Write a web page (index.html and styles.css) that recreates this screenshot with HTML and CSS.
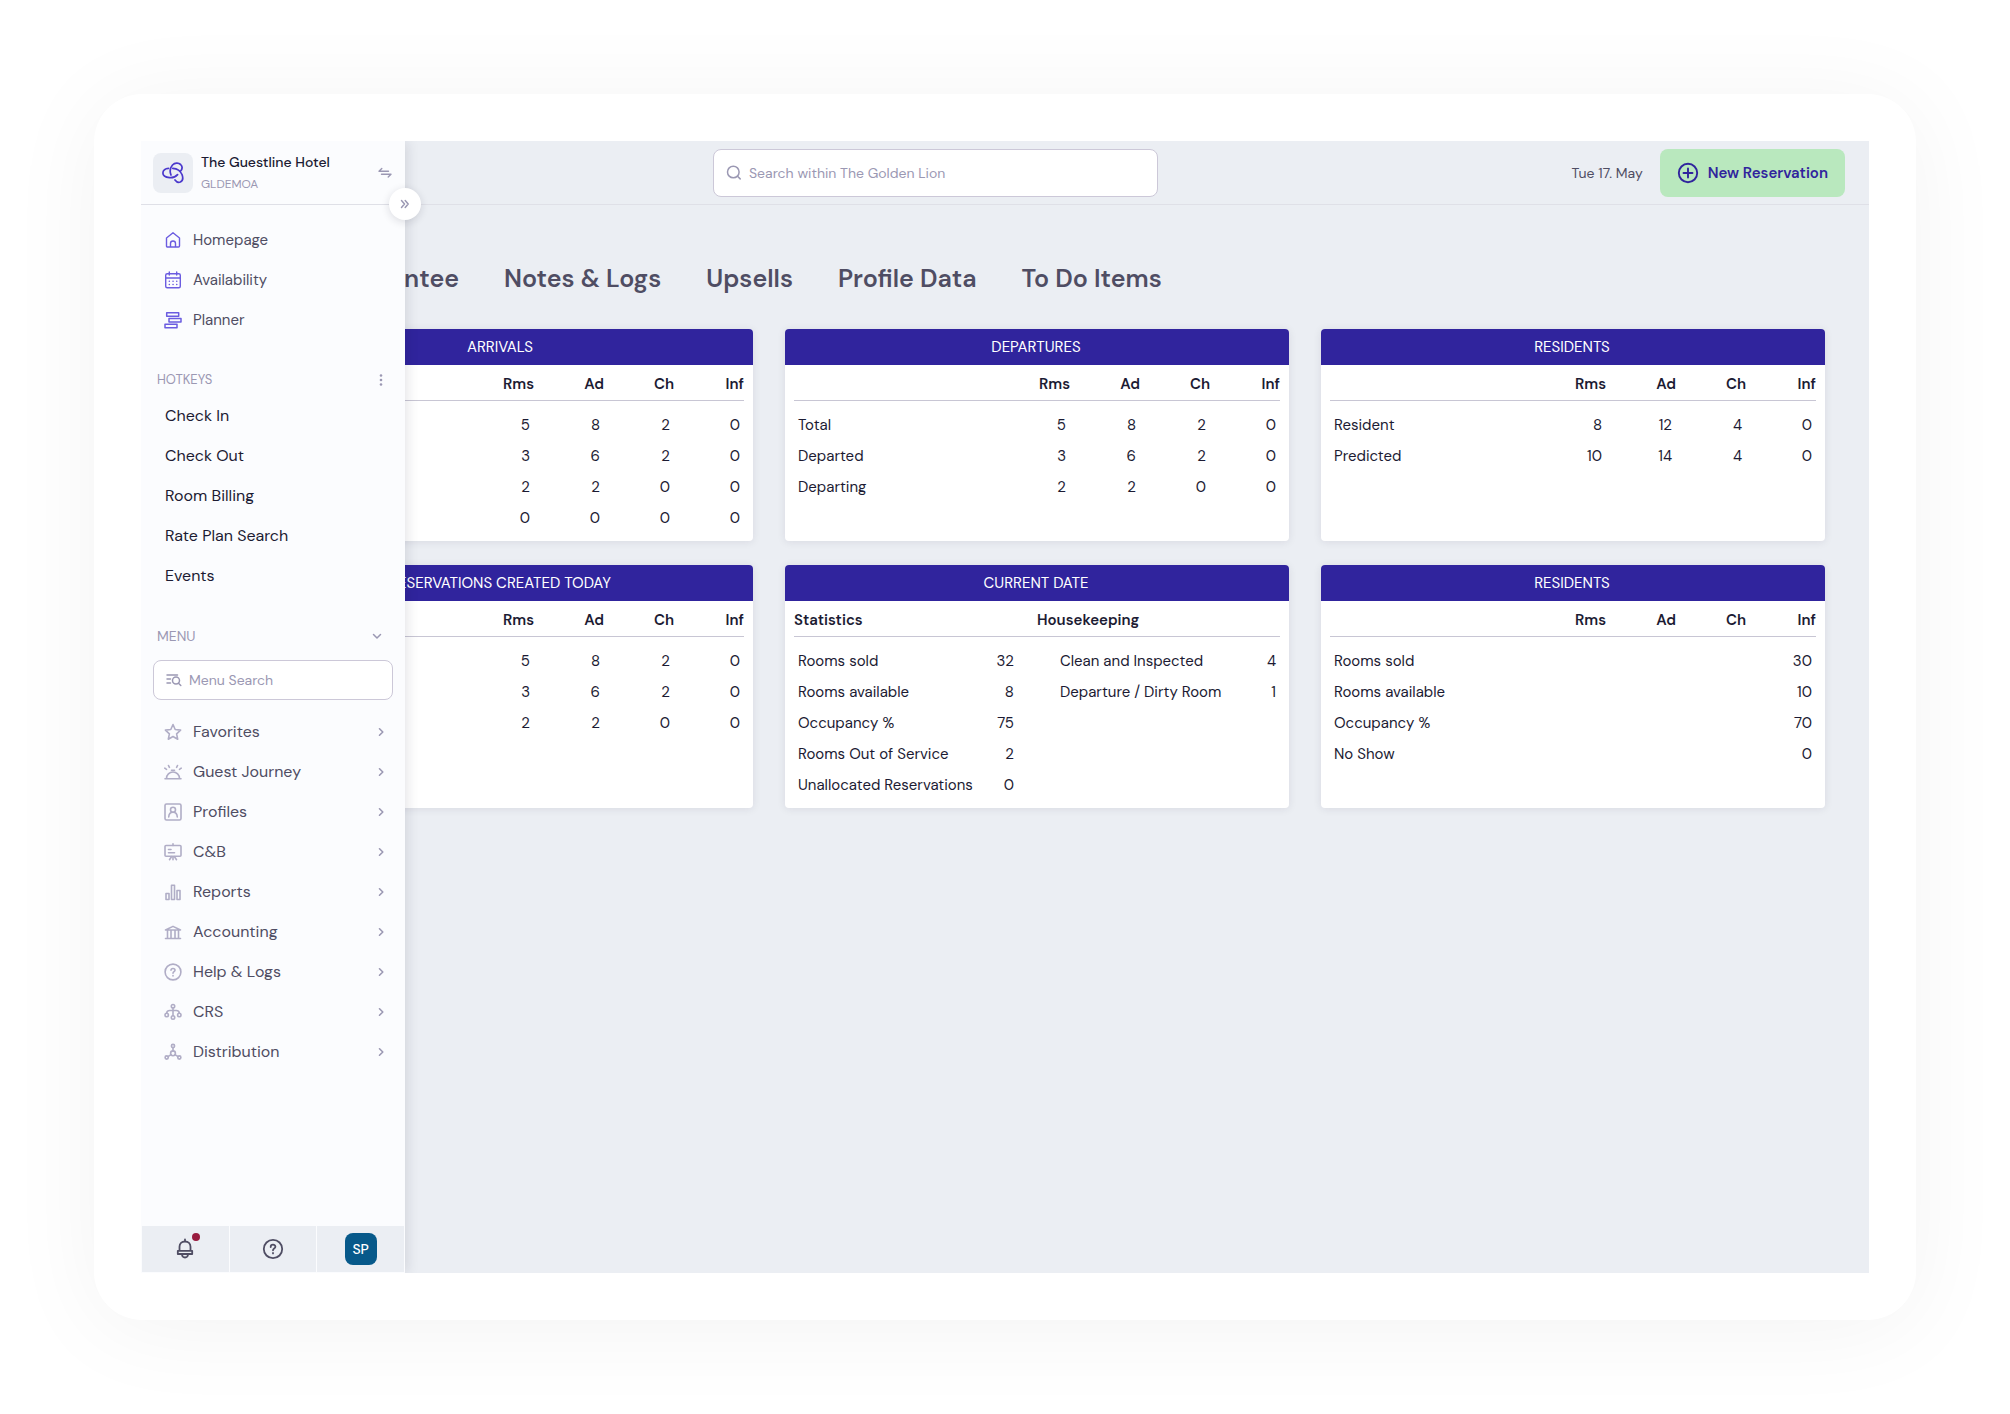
FILE: index.html
```html
<!DOCTYPE html>
<html lang="en">
<head>
<meta charset="utf-8">
<meta name="viewport" content="width=device-width, initial-scale=1">
<title>The Guestline Hotel</title>
<link rel="stylesheet" href="styles.css">
</head>
<body>
<svg class="sprite" aria-hidden="true">
  <symbol id="chevron" viewBox="0 0 10 10"><path d="M3.500 1.800L6.800 5 3.500 8.200"/></symbol>
</svg>
<div class="frame">
  <div class="app">
    <aside class="sidebar">
      <div class="property">
        <span class="logo">
          <svg width="22" height="22" viewBox="0 0 22 22" stroke-width="1.7">
            <path d="M15.600 12.600C13.500 14.900 10.500 15.900 7.500 15.600C3.500 15.300 .9 13.500 .9 11C.9 8.300 3.500 6.500 6.400 6.300"/>
            <path d="M9 13C7.600 9.500 8.300 5.500 10.500 3C12.800 .8 16.500 .6 18.600 2.500C20.600 4.500 20.200 7.300 18.400 9.300"/>
            <path d="M10.800 6.400C15 6.700 18.500 9 20 12.500C21.300 16 20.500 19 18.300 20C16.300 20.800 14.300 19.800 13 18"/>
          </svg>
        </span>
        <div class="property-text">
          <strong class="property-name">The Guestline Hotel</strong>
          <span class="property-code">GLDEMOA</span>
        </div>
        <button class="icon-button" type="button" aria-label="Switch property">
          <svg width="14" height="12" viewBox="0 0 14 12" stroke-width="1.4"><path d="M10.500 4.200H1L3.800 1.400M3.500 7.200H13L10.200 10"/></svg>
        </button>
        <button class="expand" type="button" aria-label="Expand menu">
          <svg width="10" height="10" viewBox="0 0 10 10" stroke-width="1.5"><path d="M1.500 1.500l3 3.500-3 3.500M5.200 1.500l3 3.500-3 3.500"/></svg>
        </button>
      </div>

      <nav class="nav nav-main" aria-label="Main">
        <a class="nav-item" href="#"><svg width="18" height="18" viewBox="0 0 18 18" stroke-width="1.400"><path d="M2.500 7L9 1.800 15.500 7V15a1 1 0 0 1-1 1h-11a1 1 0 0 1-1-1zM6.500 16v-3.500a2.500 2.500 0 0 1 5 0V16"/></svg>Homepage</a>
        <a class="nav-item" href="#"><svg width="18" height="18" viewBox="0 0 18 18" stroke-width="1.400"><rect x="1.700" y="2.700" width="14.600" height="14" rx="1.500"/><path d="M1.700 7h14.600M5.300 1v3M12.700 1v3"/><path d="M5.300 10.300h8M5.300 13.500h8" stroke-width="1.500" stroke-dasharray="0.100 3.600"/></svg>Availability</a>
        <a class="nav-item" href="#"><svg width="18" height="18" viewBox="0 0 18 18" stroke-width="1.500"><path d="M2.700 1.700h12v3.500h-12zM5 7.400h12v3.500H5zM1 13.200h12v3.500H1z"/></svg>Planner</a>
      </nav>

      <section class="hotkeys">
        <div class="section-head">
          <h2 class="section-title">HOTKEYS</h2>
          <button class="icon-button" type="button" aria-label="Hotkey options">
            <svg class="dots" width="8" height="12" viewBox="0 0 8 12"><circle cx="4" cy="1.500" r="1.300"/><circle cx="4" cy="6" r="1.300"/><circle cx="4" cy="10.500" r="1.300"/></svg>
          </button>
        </div>
        <nav class="nav nav-hot" aria-label="Hotkeys">
          <a class="nav-item" href="#">Check In</a>
          <a class="nav-item" href="#">Check Out</a>
          <a class="nav-item" href="#">Room Billing</a>
          <a class="nav-item" href="#">Rate Plan Search</a>
          <a class="nav-item" href="#">Events</a>
        </nav>
      </section>

      <section class="menu">
        <div class="section-head menu-head">
          <h2 class="section-title">MENU</h2>
          <button class="icon-button" type="button" aria-label="Collapse menu">
            <svg width="10" height="10" viewBox="0 0 10 10" stroke-width="1.500"><path d="M1.500 3.500L5 7l3.500-3.500"/></svg>
          </button>
        </div>
        <label class="field menu-search">
          <svg width="16" height="14" viewBox="0 0 16 14" stroke-width="1.500"><path d="M1 2h10.500M1 6h3.500M1 10h3.500M12.500 10.300l2.300 2.200"/><circle cx="10" cy="7.500" r="3.500"/></svg>
          <input type="text" placeholder="Menu Search" aria-label="Menu Search">
        </label>
        <nav class="nav nav-menu" aria-label="Menu">
          <a class="nav-item" href="#"><svg width="18" height="18" viewBox="0 0 18 18"><path d="M9 1.500l2.200 5 5.400.6-4 3.700 1.100 5.400L9 13.500l-4.700 2.700 1.100-5.400-4-3.700 5.400-.6z"/></svg>Favorites<svg class="chevron" width="10" height="10"><use href="#chevron"/></svg></a>
          <a class="nav-item" href="#"><svg width="18" height="18" viewBox="0 0 18 18"><path d="M1 15.700h16M2.500 15.500a6.500 6.500 0 0 1 13 0M7.500 7.200h3M4.500 2.500l.9 1.900M13.500 2.500l-.9 1.900M.8 5.200l1.700 1.200M17.200 5.200l-1.700 1.200"/></svg>Guest Journey<svg class="chevron" width="10" height="10"><use href="#chevron"/></svg></a>
          <a class="nav-item" href="#"><svg width="18" height="18" viewBox="0 0 18 18"><rect x="1" y="1" width="16" height="16" rx="1.500"/><circle cx="9" cy="6.800" r="2.500"/><path d="M4.700 14c.2-3 1.600-4.700 4.300-4.700s4.100 1.700 4.300 4.700"/></svg>Profiles<svg class="chevron" width="10" height="10"><use href="#chevron"/></svg></a>
          <a class="nav-item" href="#"><svg width="18" height="18" viewBox="0 0 18 18"><rect x="1" y="2.500" width="16" height="10.800" rx="1"/><path d="M9 .8v1.700M4.500 6.500h2.500M4.500 9.700h6M7.500 13.700l-2 3M10.500 13.700l2 3M9 13.700v3"/></svg>C&amp;B<svg class="chevron" width="10" height="10"><use href="#chevron"/></svg></a>
          <a class="nav-item" href="#"><svg width="18" height="18" viewBox="0 0 18 18"><path d="M2 10.500h3v6H2zM7.500 2.300h3v14.200h-3zM13 7.500h3v9h-3z"/></svg>Reports<svg class="chevron" width="10" height="10"><use href="#chevron"/></svg></a>
          <a class="nav-item" href="#"><svg width="18" height="18" viewBox="0 0 18 18"><path d="M1.500 7L9 3.400 16.500 7zM1.500 15.500h15M3.500 7v8.500M7 7v8.500M11 7v8.500M14.500 7v8.500"/></svg>Accounting<svg class="chevron" width="10" height="10"><use href="#chevron"/></svg></a>
          <a class="nav-item" href="#"><svg width="18" height="18" viewBox="0 0 18 18"><circle cx="9" cy="9" r="7.900"/><path d="M7 7.300C7 5 11 5 11 7.200c0 1.500-2 1.400-2 3M9 12.600v.3"/></svg>Help &amp; Logs<svg class="chevron" width="10" height="10"><use href="#chevron"/></svg></a>
          <a class="nav-item" href="#"><svg width="18" height="18" viewBox="0 0 18 18"><circle cx="9" cy="3.200" r="1.700"/><circle cx="2.700" cy="12" r="1.700"/><circle cx="9" cy="14.500" r="1.700"/><circle cx="15.300" cy="12" r="1.700"/><path d="M9 5.200v7.400M2.700 10.200c0-2 1.300-2.700 3-2.700h6.600c1.700 0 3 .7 3 2.700"/></svg>CRS<svg class="chevron" width="10" height="10"><use href="#chevron"/></svg></a>
          <a class="nav-item" href="#"><svg width="18" height="18" viewBox="0 0 18 18"><circle cx="9" cy="3" r="1.600"/><circle cx="9" cy="10.300" r="2.400"/><circle cx="2.700" cy="14.500" r="1.600"/><circle cx="15.300" cy="14.500" r="1.600"/><path d="M9 5v3M7 11.700l-3 2M11 11.700l3 2"/></svg>Distribution<svg class="chevron" width="10" height="10"><use href="#chevron"/></svg></a>
        </nav>
      </section>

      <footer class="sidebar-footer">
        <button class="footer-button" type="button" aria-label="Notifications">
          <span class="bell">
            <svg width="22" height="22" viewBox="0 0 22 22" stroke-width="1.800"><path d="M5.500 12.500V8.700c0-3.200 2.300-5.200 5.500-5.200s5.500 2 5.500 5.200v3.800M11 3.500V1.500M3.800 12.800h14.400v3.200H3.800zM8 16.500c.3 4 5.700 4 6 0"/></svg>
            <span class="badge"></span>
          </span>
        </button>
        <button class="footer-button" type="button" aria-label="Help">
          <svg width="22" height="22" viewBox="0 0 22 22" stroke-width="1.800"><circle cx="11" cy="11" r="9.200"/><path d="M8.700 9C8.700 6 13.400 6 13.400 8.800c0 1.900-2.400 1.700-2.400 3.500M11 15v.4"/></svg>
        </button>
        <button class="footer-button" type="button" aria-label="Account"><span class="avatar">SP</span></button>
      </footer>
    </aside>

    <div class="main">
      <header class="topbar">
        <label class="field search">
          <svg width="16" height="16" viewBox="0 0 16 16" stroke-width="1.500"><circle cx="7.300" cy="7" r="5.800"/><path d="M11.500 11.200l2.700 2.700"/></svg>
          <input type="text" placeholder="Search within The Golden Lion" aria-label="Search within The Golden Lion">
        </label>
        <div class="actions">
          <time class="date" datetime="2022-05-17">Tue 17. May</time>
          <button class="primary" type="button">
            <svg width="22" height="22" viewBox="0 0 22 22" stroke-width="1.900"><circle cx="11" cy="11" r="9.200"/><path d="M11 6.500v9M6.500 11h9"/></svg>New Reservation
          </button>
        </div>
      </header>
      <main class="content">
        <nav class="tabs" aria-label="Sections">
          <a class="tab tab-first" href="#">Guarantee</a>
          <a class="tab" href="#">Notes &amp; Logs</a>
          <a class="tab" href="#">Upsells</a>
          <a class="tab" href="#">Profile Data</a>
          <a class="tab" href="#">To Do Items</a>
        </nav>
        <div class="cards">
          <section class="card">
            <h2 class="card-title">ARRIVALS</h2>
            <table class="data">
              <thead><tr><th class="label"></th><th>Rms</th><th>Ad</th><th>Ch</th><th>Inf</th></tr></thead>
              <tbody>
                <tr><td>Total</td><td>5</td><td>8</td><td>2</td><td>0</td></tr>
                <tr><td>Arrived</td><td>3</td><td>6</td><td>2</td><td>0</td></tr>
                <tr><td>Arriving</td><td>2</td><td>2</td><td>0</td><td>0</td></tr>
                <tr><td>No Show</td><td>0</td><td>0</td><td>0</td><td>0</td></tr>
              </tbody>
            </table>
          </section>
          <section class="card">
            <h2 class="card-title">DEPARTURES</h2>
            <table class="data">
              <thead><tr><th class="label"></th><th>Rms</th><th>Ad</th><th>Ch</th><th>Inf</th></tr></thead>
              <tbody>
                <tr><td>Total</td><td>5</td><td>8</td><td>2</td><td>0</td></tr>
                <tr><td>Departed</td><td>3</td><td>6</td><td>2</td><td>0</td></tr>
                <tr><td>Departing</td><td>2</td><td>2</td><td>0</td><td>0</td></tr>
              </tbody>
            </table>
          </section>
          <section class="card">
            <h2 class="card-title">RESIDENTS</h2>
            <table class="data">
              <thead><tr><th class="label"></th><th>Rms</th><th>Ad</th><th>Ch</th><th>Inf</th></tr></thead>
              <tbody>
                <tr><td>Resident</td><td>8</td><td>12</td><td>4</td><td>0</td></tr>
                <tr><td>Predicted</td><td>10</td><td>14</td><td>4</td><td>0</td></tr>
              </tbody>
            </table>
          </section>
          <section class="card">
            <h2 class="card-title">RESERVATIONS CREATED TODAY</h2>
            <table class="data">
              <thead><tr><th class="label"></th><th>Rms</th><th>Ad</th><th>Ch</th><th>Inf</th></tr></thead>
              <tbody>
                <tr><td>Total</td><td>5</td><td>8</td><td>2</td><td>0</td></tr>
                <tr><td>Today</td><td>3</td><td>6</td><td>2</td><td>0</td></tr>
                <tr><td>Future</td><td>2</td><td>2</td><td>0</td><td>0</td></tr>
              </tbody>
            </table>
          </section>
          <section class="card">
            <h2 class="card-title">CURRENT DATE</h2>
            <table class="data paired">
              <colgroup><col class="pair-label"><col class="pair-value"><col class="pair-label"><col class="pair-value"></colgroup>
              <thead><tr><th colspan="2">Statistics</th><th colspan="2">Housekeeping</th></tr></thead>
              <tbody>
                <tr><td>Rooms sold</td><td>32</td><td>Clean and Inspected</td><td>4</td></tr>
                <tr><td>Rooms available</td><td>8</td><td>Departure / Dirty Room</td><td>1</td></tr>
                <tr><td>Occupancy %</td><td>75</td><td></td><td></td></tr>
                <tr><td>Rooms Out of Service</td><td>2</td><td></td><td></td></tr>
                <tr><td>Unallocated Reservations</td><td>0</td><td></td><td></td></tr>
              </tbody>
            </table>
          </section>
          <section class="card">
            <h2 class="card-title">RESIDENTS</h2>
            <table class="data">
              <thead><tr><th class="label"></th><th>Rms</th><th>Ad</th><th>Ch</th><th>Inf</th></tr></thead>
              <tbody>
                <tr><td>Rooms sold</td><td></td><td></td><td></td><td>30</td></tr>
                <tr><td>Rooms available</td><td></td><td></td><td></td><td>10</td></tr>
                <tr><td>Occupancy %</td><td></td><td></td><td></td><td>70</td></tr>
                <tr><td>No Show</td><td></td><td></td><td></td><td>0</td></tr>
              </tbody>
            </table>
          </section>
        </div>
      </main>
    </div>
  </div>
</div>
</body>
</html>
```
FILE: styles.css
```css
:root {
  --ink: #1c1b33;
  --text: #4f4d63;
  --muted: #9b98b3;
  --indigo: #30249d;
  --violet: #6b5ce0;
  --surface: #ebeef3;
  --panel: #fbfcfe;
  --border: #ccc8d8;
}

* { box-sizing: border-box; }

body {
  margin: 0;
  min-height: 100vh;
  padding: 94px;
  display: flex;
  background: #fff;
  color: var(--ink);
  font: 16px/24px "DM Sans", Lato, "Open Sans", sans-serif;
}

svg { display: block; flex: none; fill: none; stroke: currentColor; stroke-linecap: round; stroke-linejoin: round; }
.sprite { position: absolute; width: 0; height: 0; }
a { color: inherit; text-decoration: none; }
button { margin: 0; padding: 0; border: 0; background: none; color: inherit; font: inherit; cursor: pointer; }
h2 { margin: 0; font-weight: 400; }

.frame {
  flex: 1;
  min-width: 0;
  display: flex;
  padding: 47px;
  border-radius: 48px;
  background: #fff;
  box-shadow: 0 8px 96px rgba(0, 0, 0, 0.05);
}

/* The open drawer is wider than its rail and lies over the main column. */
.app {
  flex: 1;
  min-width: 0;
  display: grid;
  grid-template-columns: 64px minmax(0, 1fr);
  overflow: hidden;
  background: var(--surface);
}

.sidebar {
  z-index: 1;
  width: 264px;
  display: flex;
  flex-direction: column;
  background: var(--panel);
  box-shadow: 2px 0 12px rgba(28, 27, 51, 0.12);
}

.property {
  position: relative;
  height: 64px;
  display: flex;
  align-items: center;
  gap: 8px;
  padding: 0 13px 0 12px;
  border-bottom: 1px solid #dfe0e7;
}
.logo {
  width: 40px;
  height: 40px;
  display: grid;
  place-items: center;
  border-radius: 8px;
  background: var(--surface);
  color: #4a38cc;
}
.property-text { flex: 1; display: flex; flex-direction: column; gap: 2px; padding-top: 1px; }
.property-name { font-size: 14px; line-height: 20px; font-weight: 500; }
.property-code { font-size: 12px; line-height: 20px; color: var(--muted); }
.icon-button { color: var(--muted); }
.expand {
  position: absolute;
  right: -16px;
  bottom: -16px;
  width: 32px;
  height: 32px;
  display: grid;
  place-items: center;
  border-radius: 50%;
  background: #fff;
  color: var(--muted);
  box-shadow: 0 2px 8px rgba(28, 27, 51, 0.14);
}

.nav { display: flex; flex-direction: column; }
.nav-item { height: 40px; display: flex; align-items: center; gap: 11px; padding: 0 19px 0 23px; color: var(--text); }
.nav-main { padding-top: 15px; font-size: 15px; }
.nav-main svg { color: var(--violet); }
.nav-hot .nav-item { padding-left: 24px; color: var(--ink); }
.nav-menu { padding-top: 12px; }
.nav-menu svg { stroke-width: 1.6; color: #b0adc6; }
.nav-item .chevron { margin-left: auto; color: var(--muted); }

.section-head { height: 32px; display: flex; align-items: center; justify-content: space-between; padding: 0 20px 0 16px; }
.section-title { font-size: 13px; color: var(--muted); }
.hotkeys { padding-top: 24px; }
.menu { padding-top: 24px; }
.menu-head { padding-right: 23px; }
.menu-head .section-title { font-size: 14px; }
.dots { fill: currentColor; stroke: none; }

.field {
  display: flex;
  align-items: center;
  gap: 7px;
  padding: 0 12px;
  border: 1px solid var(--border);
  border-radius: 8px;
  background: #fff;
  color: var(--muted);
}
.field input { flex: 1; min-width: 0; padding: 0; border: 0; outline: 0; background: none; color: var(--ink); font: inherit; font-size: 14px; }
.field input::placeholder { color: var(--muted); opacity: 1; }
.menu-search { height: 40px; margin: 8px 12px 0; }

.sidebar-footer { margin-top: auto; height: 47px; display: grid; grid-template-columns: repeat(3, 1fr); gap: 1px; padding: 0 1px 1px; }
.footer-button { display: grid; place-items: center; background: var(--surface); color: var(--text); }
.bell { position: relative; }
.badge { position: absolute; top: -5px; right: -4px; width: 8px; height: 8px; border-radius: 50%; background: #981b3e; }
.avatar { width: 32px; height: 32px; display: grid; place-items: center; border-radius: 8px; background: #07598a; color: #fff; font-size: 14px; font-weight: 500; }

.main { grid-column: 2; min-width: 0; display: flex; flex-direction: column; }
.topbar {
  height: 64px;
  display: grid;
  grid-template-columns: 484fr 445fr 687fr;
  align-items: center;
  padding: 0 24px;
  border-bottom: 1px solid #dfe0e7;
}
.search { grid-column: 2; height: 48px; }
.actions { display: flex; align-items: center; justify-content: flex-end; gap: 17px; }
.date { font-size: 14px; color: var(--text); }
.primary { height: 48px; display: flex; align-items: center; gap: 9px; padding: 0 17px; border-radius: 8px; background: #b9e8be; color: var(--indigo); font-size: 15px; font-weight: 600; }

.content { padding: 58px 44px; }
.tabs { display: flex; gap: 45px; color: var(--text); font-size: 25px; line-height: 32px; font-weight: 600; white-space: nowrap; }
.tab-first { min-width: 210px; text-align: right; }

.cards { display: grid; grid-template-columns: repeat(3, minmax(0, 1fr)); gap: 24px 32px; margin-top: 34px; }
.card { padding-bottom: 8px; border-radius: 4px; background: #fff; box-shadow: 0 1px 8px rgba(28, 27, 51, 0.09); }
.card-title { padding-right: 2px; border-radius: 4px 4px 0 0; background: var(--indigo); color: #fff; font-size: 15px; line-height: 36px; text-align: center; }

.data { width: calc(100% - 18px); margin: 0 9px; border-spacing: 0; table-layout: fixed; font-size: 15px; white-space: nowrap; }
.data th { width: 70px; height: 36px; padding: 2px 0 0; border-bottom: 1px solid #c8c6d4; font-weight: 600; text-align: right; }
.data .label { width: auto; }
.data td { height: 31px; padding: 0 4px; text-align: right; }
.data td:first-child { text-align: left; }
.data tbody::before { content: ""; display: table-row; height: 8px; }

.paired .pair-label { width: 37%; }
.paired .pair-value { width: 13%; }
.paired th { width: auto; text-align: left; }
.paired td:nth-child(2) { padding-right: 23px; }
.paired td:nth-child(3) { padding-left: 23px; text-align: left; }
```
